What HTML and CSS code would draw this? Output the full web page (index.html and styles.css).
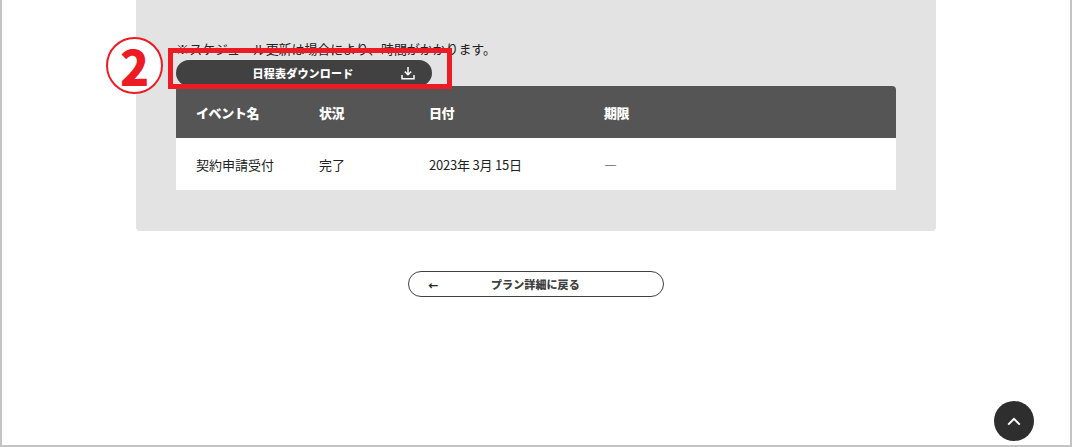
FILE: index.html
```html
<!DOCTYPE html>
<html lang="ja">
<head>
<meta charset="utf-8">
<title>スケジュール</title>
<link rel="stylesheet" href="styles.css">
</head>
<body>
<div class="frame">
  <main class="panel">
    <p class="note">※ スケジュール更新は場合により、時間がかかります。</p>
    <a class="download" href="#">
      <span>日程表ダウンロード</span>
      <svg class="download-icon" viewBox="0 0 14 14" width="14" height="14" aria-hidden="true">
        <path d="M7 1v7.5M3.8 5.6 7 8.8l3.2-3.2M1 9v3.8h12V9" fill="none" stroke="#fff" stroke-width="1.5"/>
      </svg>
    </a>
    <div class="table">
      <div class="row head">
        <div>イベント名</div><div>状況</div><div>日付</div><div>期限</div>
      </div>
      <div class="row body-row">
        <div>契約申請受付</div><div>完了</div><div class="date">2023年 3月 15日</div><div>―</div>
      </div>
    </div>
  </main>
  <div class="back-wrap">
    <a class="back" href="#"><span class="arrow">←</span><span>プラン詳細に戻る</span></a>
  </div>
  <a class="totop" href="#" aria-label="top">
    <svg viewBox="0 0 14 9" width="14" height="9" aria-hidden="true"><path d="M1.2 7.6 7 1.8l5.8 5.8" fill="none" stroke="#fff" stroke-width="2"/></svg>
  </a>
  <div class="mark-box"></div>
  <div class="mark-num">2</div>
</div>
</body>
</html>
```

FILE: styles.css
```css
* { box-sizing: border-box; }
html, body { margin: 0; padding: 0; }
body {
  width: 1072px;
  height: 447px;
  overflow: hidden;
  background: #fff;
  color: #222;
  font-family: "Noto Sans CJK JP", "Noto Sans", sans-serif;
}
.frame {
  position: relative;
  width: 1072px;
  height: 447px;
  border-left: 2px solid #c4c4c4;
  border-right: 2px solid #c4c4c4;
  border-bottom: 2px solid #c4c4c4;
}
.panel {
  width: 800px;
  height: 231px;
  margin-left: 134px;
  padding: 41px 40px 0;
  background: #e3e3e3;
  border-radius: 0 0 4px 4px;
}
.note {
  margin: 0;
  height: 18px;
  font-size: 13px;
  line-height: 16px;
  letter-spacing: -0.1px;
  word-spacing: -2.5px;
}
.download {
  display: flex;
  align-items: center;
  width: 256px;
  height: 26px;
  margin-top: 1px;
  padding: 0 17px 0 0;
  border-radius: 13px;
  background: #414141;
  color: #fff;
  font-size: 11px;
  font-weight: 900;
  letter-spacing: 0.2px;
  text-decoration: none;
}
.download span { flex: 1; padding-left: 29px; text-align: center; }
.download-icon { flex: none; }
.table {
  width: 720px;
  border-radius: 4px 4px 0 0;
  overflow: hidden;
}
.row {
  display: grid;
  grid-template-columns: 123px 110px 175px 1fr;
  align-items: center;
  height: 52px;
  padding-left: 20px;
}
.head {
  background: #555;
  color: #fff;
  font-size: 13px;
  font-weight: 900;
  letter-spacing: -0.4px;
}
.body-row {
  background: #fff;
  color: #222;
  font-size: 13px;
}
.date { letter-spacing: -0.22px; }
.back-wrap {
  display: flex;
  justify-content: center;
  margin-top: 40px;
}
.back {
  display: flex;
  align-items: center;
  width: 256px;
  height: 26px;
  padding-left: 19px;
  border: 1px solid #414141;
  border-radius: 13px;
  background: #fff;
  color: #414141;
  font-size: 11px;
  font-weight: 900;
  letter-spacing: 0.1px;
  text-decoration: none;
}
.arrow { width: 63px; padding-top: 3px; font-size: 10px; color: #222; }
.totop {
  position: absolute;
  left: 992px;
  top: 401px;
  display: flex;
  align-items: center;
  justify-content: center;
  width: 40px;
  height: 40px;
  border-radius: 50%;
  background: #2e2e2e;
}
.mark-box {
  position: absolute;
  left: 166px;
  top: 48px;
  width: 284px;
  height: 41px;
  border: 5px solid #ed1c24;
}
.mark-num {
  position: absolute;
  left: 104px;
  top: 37px;
  width: 57px;
  height: 57px;
  border: 2px solid #ed1c24;
  border-radius: 50%;
  background: #fff;
  color: #ed1c24;
  font-size: 48px;
  font-weight: 900;
  line-height: 53px;
  text-align: center;
}
```
